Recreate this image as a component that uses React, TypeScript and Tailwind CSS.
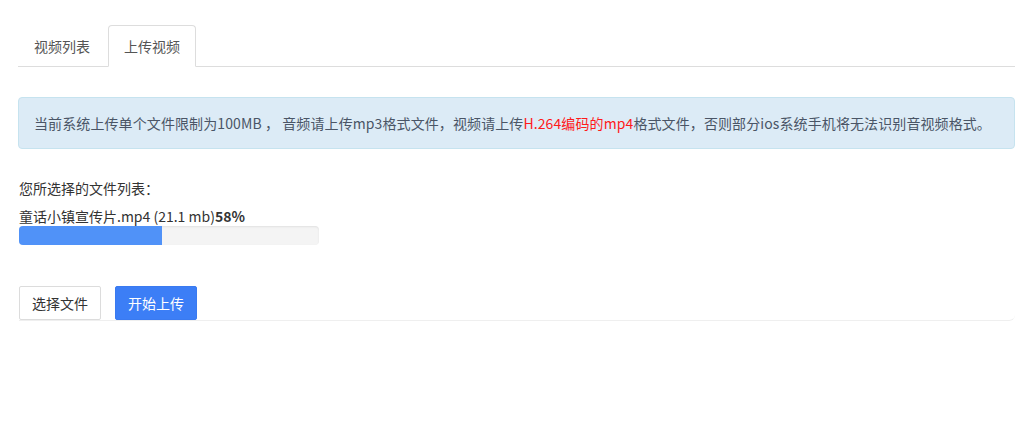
/**
 * Upload page — tabs, notice banner, selected file list with progress,
 * and the two action buttons.
 */
const FONT = "font-['Microsoft_YaHei','Noto_Sans_CJK_SC',sans-serif]";

const file = { name: "童话小镇宣传片.mp4", size: "21.1 mb", percent: 58 };

export default function App() {
  return (
    <div className={`${FONT} min-h-[426px] bg-white pl-[18px] pr-[3px] pt-[25px] text-[14px] leading-[20px] text-[#333]`}>
      {/* ---------- tabs ---------- */}
      <div className="flex border-b border-[#ddd]">
        <div className="mr-[2px] -mb-px border border-transparent px-[15px] py-[10px] text-[#555]">
          视频列表
        </div>
        <div className="-mb-px rounded-t-[4px] border border-[#ddd] border-b-white bg-white px-[15px] py-[10px] text-[#555]">
          上传视频
        </div>
      </div>

      {/* ---------- notice ---------- */}
      <div className="mt-[30px] rounded-[4px] border border-[#c6e3ef] bg-[#dcebf6] px-[15px] py-[15px] tracking-[0.1px] text-[#4a5566]">
        当前系统上传单个文件限制为100MB ， 音频请上传mp3格式文件，视频请上传
        <span className="text-[#ff1a1a]">H.264编码的mp4</span>
        格式文件，否则部分ios系统手机将无法识别音视频格式。
      </div>

      {/* ---------- file list ---------- */}
      <div className="ml-px mt-[29px]">
        <div>您所选择的文件列表：</div>
        <div className="mt-[8px]">
          {file.name} ({file.size})<b>{file.percent}%</b>
        </div>
        <div className="h-[19px] w-[300px] overflow-hidden rounded-[4px] bg-[#f4f4f4] shadow-[inset_0_1px_2px_rgba(0,0,0,0.08)]">
          <div className="h-full w-[143px] bg-[#5092f8]" />
        </div>
      </div>

      {/* ---------- actions ---------- */}
      <div className="ml-px mt-[41px] flex gap-[14px] rounded-br-[6px] border-b border-[#efefef]">
        <button className="h-[34px] rounded-[2px] border border-[#dcdcdc] bg-white px-[12px] text-[#333]">
          选择文件
        </button>
        <button className="h-[34px] rounded-[2px] border border-[#3a7af0] bg-[#3c7ef6] px-[12px] text-white">
          开始上传
        </button>
      </div>
    </div>
  );
}
